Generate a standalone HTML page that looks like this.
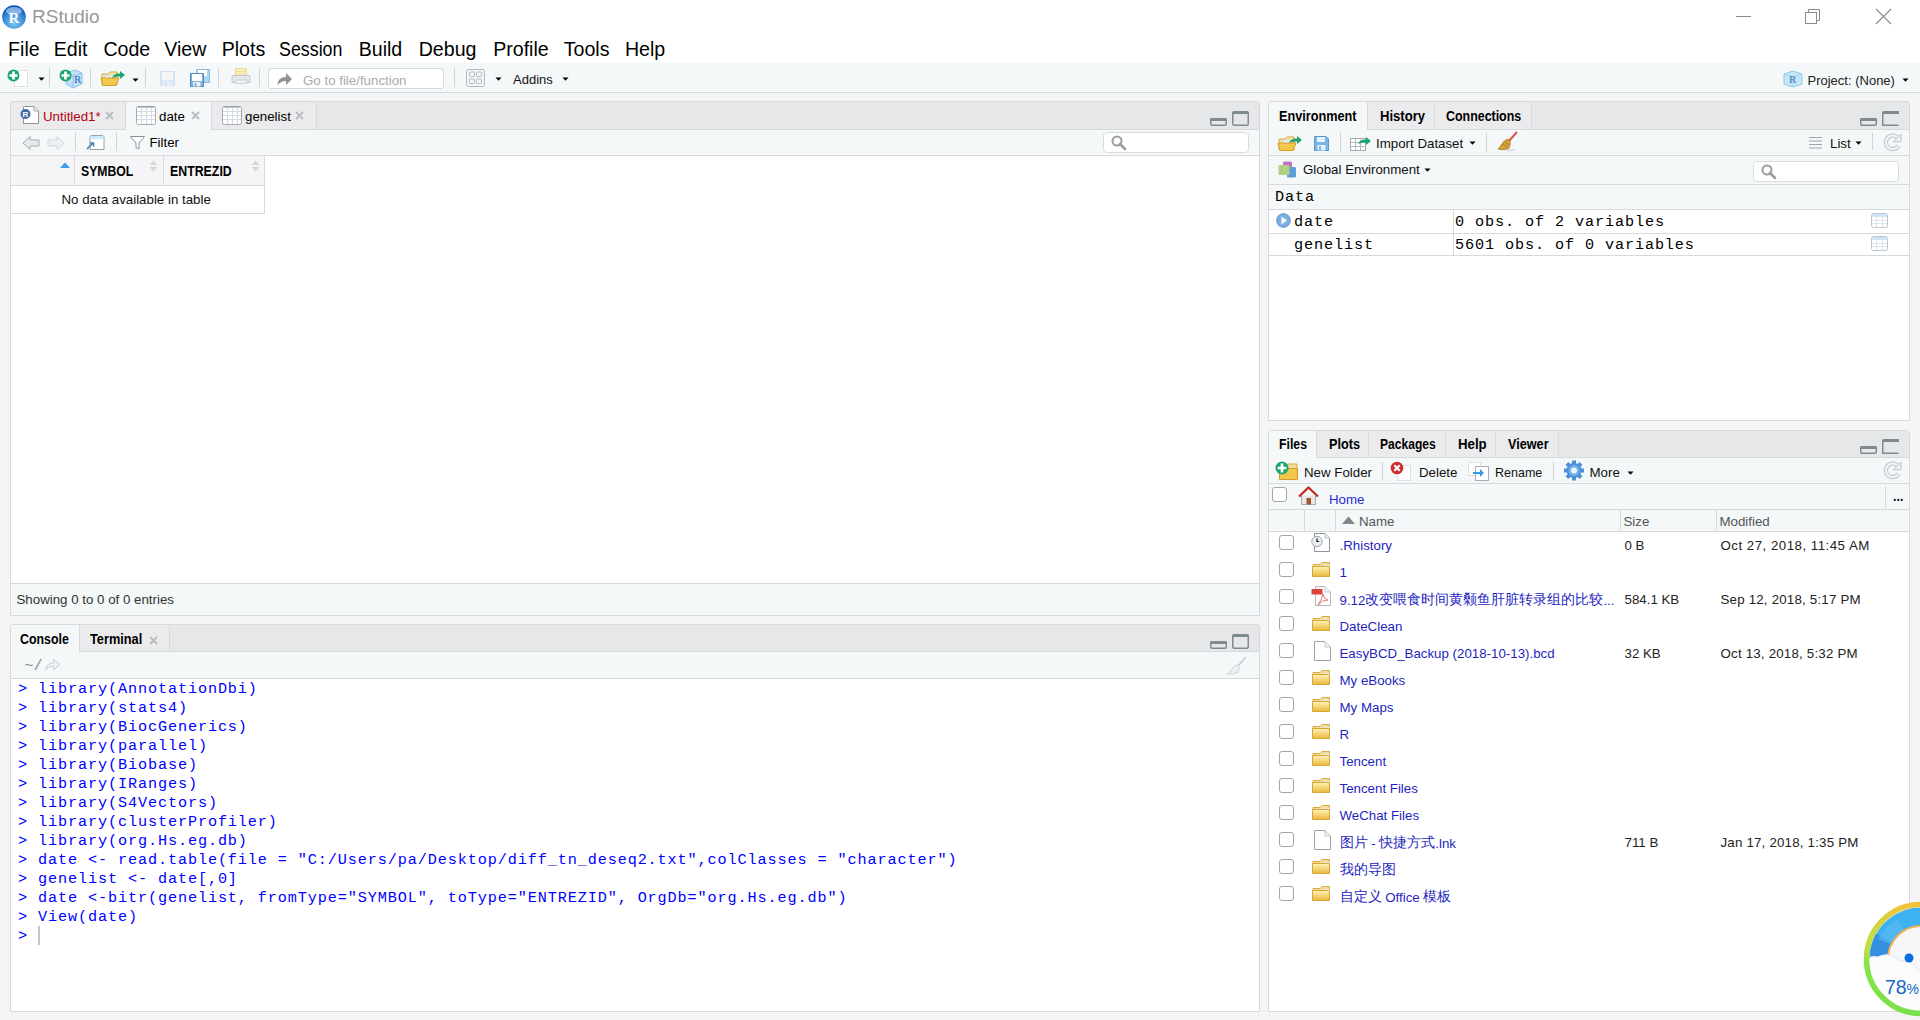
<!DOCTYPE html>
<html><head><meta charset="utf-8">
<style>
*{box-sizing:border-box;margin:0;padding:0}
html,body{width:1920px;height:1020px;overflow:hidden;background:#f5f5f7;font-family:"Liberation Sans",sans-serif;color:#000;position:relative}
.a{position:absolute}
svg.a{overflow:visible}
.t{position:absolute;white-space:nowrap;line-height:1}
.mono{font-family:"Liberation Mono",monospace}
</style></head><body>

<div class="a" style="left:0px;top:0px;width:1920px;height:63px;background:#fff;"></div>
<svg class="a" style="left:2px;top:5px;" width="24" height="24" viewBox="0 0 24 24"><defs><radialGradient id="rg" cx="0.5" cy="0.75" r="0.7"><stop offset="0" stop-color="#7cc8f0"/><stop offset="0.6" stop-color="#3b8fd8"/><stop offset="1" stop-color="#0a4fc0"/></radialGradient></defs><circle cx="12" cy="12" r="11.8" fill="url(#rg)"/><ellipse cx="12" cy="6" rx="8" ry="4" fill="#cfe6fa" opacity="0.55"/><text x="12" y="18" text-anchor="middle" font-family="Liberation Serif" font-weight="bold" font-size="15" fill="#fff">R</text></svg>
<div class="t" style="left:32.00px;top:6.92px;font-size:19px;color:#979797;">RStudio</div>
<div class="a" style="left:1736px;top:16px;width:15px;height:1px;background:#8a8a8a;"></div>
<svg class="a" style="left:1804px;top:8px;" width="18" height="18" viewBox="0 0 18 18"><path d="M4.5 4V1.5H15.5V12.5H13" fill="none" stroke="#8a8a8a"/><rect x="1.5" y="4.5" width="11" height="11" fill="none" stroke="#8a8a8a"/></svg>
<svg class="a" style="left:1875px;top:8px;" width="17" height="17" viewBox="0 0 17 17"><path d="M1 1L16 16M16 1L1 16" stroke="#8a8a8a" stroke-width="1.1"/></svg>
<div class="t" style="left:8.10px;top:39.71px;font-size:19.6px;color:#000;">File</div>
<div class="t" style="left:53.70px;top:39.71px;font-size:19.6px;color:#000;">Edit</div>
<div class="t" style="left:103.40px;top:39.71px;font-size:19.6px;color:#000;">Code</div>
<div class="t" style="left:164.30px;top:39.71px;font-size:19.6px;color:#000;">View</div>
<div class="t" style="left:221.70px;top:39.71px;font-size:19.6px;color:#000;">Plots</div>
<div class="t" style="left:279.20px;top:39.71px;font-size:19.6px;color:#000;transform:scaleX(0.91);transform-origin:0 0;">Session</div>
<div class="t" style="left:358.70px;top:39.71px;font-size:19.6px;color:#000;">Build</div>
<div class="t" style="left:418.70px;top:39.71px;font-size:19.6px;color:#000;">Debug</div>
<div class="t" style="left:493.20px;top:39.71px;font-size:19.6px;color:#000;">Profile</div>
<div class="t" style="left:563.70px;top:39.71px;font-size:19.6px;color:#000;">Tools</div>
<div class="t" style="left:624.95px;top:39.71px;font-size:19.6px;color:#000;">Help</div>
<div class="a" style="left:0px;top:63px;width:1920px;height:29px;background:#f4f8f9;"></div>
<div class="a" style="left:0px;top:92px;width:1920px;height:1px;background:#d5d9db;"></div>
<svg class="a" style="left:7px;top:68px;" width="22" height="20" viewBox="0 0 22 20"><rect x="7.5" y="2.5" width="13" height="16" fill="#fff" stroke="#dfe3e6"/><circle cx="6.5" cy="7.5" r="6" fill="#1ba570"/><path d="M2.42 7.5H10.58M6.5 3.42V11.58" stroke="#fff" stroke-width="2.7"/></svg>
<svg class="a" style="left:38px;top:77px;" width="7" height="4" viewBox="0 0 7 4"><path d="M0.5 0.5H6.5L3.5 3.8Z" fill="#000"/></svg>
<div class="a" style="left:49px;top:68px;width:1px;height:19px;background:#d0d4d6;"></div>
<svg class="a" style="left:58px;top:68px;" width="26" height="22" viewBox="0 0 26 22"><path d="M8 5L17 2L24 5V16L15 20L8 16Z" fill="#bfe0f6" stroke="#8cc3e8"/><path d="M8 5L15 8L24 5M15 8V20" fill="none" stroke="#8cc3e8"/><text x="16" y="15" font-family="Liberation Serif" font-size="11" fill="#2b6cb3">R</text><circle cx="7.5" cy="7.5" r="6" fill="#1ba570"/><path d="M3.42 7.5H11.58M7.5 3.42V11.58" stroke="#fff" stroke-width="2.7"/></svg>
<div class="a" style="left:90px;top:68px;width:1px;height:19px;background:#d0d4d6;"></div>
<svg class="a" style="left:100px;top:69px;" width="26" height="18" viewBox="0 0 26 18"><path d="M2 5H8L10 3H17V16H2Z" fill="#f8e7ab" stroke="#d7a83c"/><path d="M5 6H15L16 16H4Z" fill="#eceff1" stroke="#c9cdd1" stroke-width="0.7"/><path d="M1 9H19L16 16.5H3Z" fill="#f2c94c" stroke="#d39c22"/><path d="M12 9Q14 4 20 4.5V2L25 6L20 10V7.5Q15 7 12 9Z" fill="#1ea56d"/></svg>
<svg class="a" style="left:132px;top:78px;" width="7" height="4" viewBox="0 0 7 4"><path d="M0.5 0.5H6.5L3.5 3.8Z" fill="#000"/></svg>
<div class="a" style="left:145px;top:68px;width:1px;height:19px;background:#d0d4d6;"></div>
<svg class="a" style="left:159px;top:70px;" width="17" height="17" viewBox="0 0 17 17"><path d="M1.5 1.5H15.5V15.5H1.5Z" fill="#dbe7f5" stroke="#d3e0ef" rx="1"/><rect x="3" y="2" width="11" height="8" fill="#f4f6f8"/><rect x="4.5" y="11" width="8" height="4.5" fill="#e9f0f8"/><rect x="6" y="12" width="2" height="3.5" fill="#cfe0f3"/></svg>
<svg class="a" style="left:189px;top:68px;" width="22" height="20" viewBox="0 0 22 20"><path d="M7.5 1.5H20.5V14.5H7.5Z" fill="#a9daf5" stroke="#8fb9dc"/><rect x="9" y="2" width="9" height="6" fill="#ffffff"/><path d="M1.5 5.5H14.5V18.5H1.5Z" fill="#78afdc" stroke="#5b87b8"/><rect x="3" y="6" width="10" height="7" fill="#ffffff"/><rect x="4" y="14" width="7.5" height="4.5" fill="#eef4fa"/><rect x="5.5" y="15" width="2" height="3.5" fill="#78afdc"/></svg>
<div class="a" style="left:218px;top:68px;width:1px;height:19px;background:#d0d4d6;"></div>
<svg class="a" style="left:231px;top:67px;" width="20" height="19" viewBox="0 0 20 19"><rect x="4.5" y="1.5" width="11" height="8" fill="#f6efbe" stroke="#e8dc9a"/><path d="M4.5 4.5H15.5M4.5 7H15.5" stroke="#eadf9e"/><path d="M2 8.5H18Q19 8.5 19 9.5V15.5H1V9.5Q1 8.5 2 8.5Z" fill="#e3e7ea" stroke="#c3c8cc"/><rect x="4.5" y="13" width="11" height="3.5" fill="#eef1f3" stroke="#cfd3d6"/></svg>
<div class="a" style="left:259px;top:68px;width:1px;height:19px;background:#d0d4d6;"></div>
<div class="a" style="left:268px;top:68px;width:176px;height:21px;background:#fff;border:1px solid #d5d9dc;border-radius:3px"></div>
<svg class="a" style="left:276px;top:71px;" width="17" height="15" viewBox="0 0 17 15"><path d="M1.5 14.5Q1.5 6 10 6V2L16 8L10 14V10Q4 10 1.5 14.5Z" fill="#8e9297"/></svg>
<div class="t" style="left:303.00px;top:73.74px;font-size:13.3px;color:#a7abaf;">Go to file/function</div>
<div class="a" style="left:454px;top:68px;width:1px;height:19px;background:#d0d4d6;"></div>
<svg class="a" style="left:466px;top:69px;" width="19" height="18" viewBox="0 0 19 18"><rect x="0.5" y="0.5" width="18" height="17" rx="2" fill="#f3f5f7" stroke="#b3b8bd"/><rect x="3.5" y="3" width="5" height="4.5" rx="0.8" fill="none" stroke="#b5babf"/><rect x="10.5" y="3" width="5" height="4.5" rx="0.8" fill="none" stroke="#b5babf"/><rect x="3.5" y="10" width="5" height="4.5" rx="0.8" fill="none" stroke="#b5babf"/><rect x="10.5" y="10" width="5" height="4.5" rx="0.8" fill="none" stroke="#b5babf"/></svg>
<svg class="a" style="left:495px;top:77px;" width="7" height="4" viewBox="0 0 7 4"><path d="M0.5 0.5H6.5L3.5 3.8Z" fill="#000"/></svg>
<div class="t" style="left:513.00px;top:73.10px;font-size:13px;color:#111;">Addins</div>
<svg class="a" style="left:562px;top:77px;" width="7" height="4" viewBox="0 0 7 4"><path d="M0.5 0.5H6.5L3.5 3.8Z" fill="#000"/></svg>
<svg class="a" style="left:1783px;top:70px;" width="20" height="18" viewBox="0 0 20 18"><path d="M1 4L10 1L19 4V14L10 17L1 14Z" fill="#c6e6f8" stroke="#8ccbec"/><path d="M1 4L10 7L19 4M10 7V17" fill="none" stroke="#9ad2ef"/><text x="6" y="13" font-family="Liberation Serif" font-size="11" fill="#2e78b8">R</text></svg>
<div class="t" style="left:1807.50px;top:73.70px;font-size:13px;color:#222;">Project: (None)</div>
<svg class="a" style="left:1902px;top:78px;" width="7" height="4" viewBox="0 0 7 4"><path d="M0.5 0.5H6.5L3.5 3.8Z" fill="#000"/></svg>
<div class="a" style="left:10px;top:101px;width:1250px;height:515px;background:#fff;border:1px solid #d6dadc;border-radius:3px 3px 0 0"></div>
<div class="a" style="left:11px;top:102px;width:1248px;height:27px;background:#e6e7e9;border-radius:2px 2px 0 0"></div>
<div class="a" style="left:11px;top:129px;width:1248px;height:1px;background:#d6dadc;"></div>
<div class="a" style="left:11px;top:102px;width:115px;height:27px;background:#ebebed;border-right:1px solid #d6dadc;border-radius:2px 2px 0 0"></div>
<div class="a" style="left:126px;top:102px;width:86px;height:28px;background:#f4f8f9;border-right:1px solid #d6dadc;border-radius:2px 2px 0 0"></div>
<div class="a" style="left:212px;top:102px;width:105px;height:27px;background:#ebebed;border-right:1px solid #d6dadc;border-radius:2px 2px 0 0"></div>
<svg class="a" style="left:21px;top:105px;" width="20" height="20" viewBox="0 0 20 20"><path d="M2.5 1.5H13L17.5 6V18.5H2.5Z" fill="#fff" stroke="#8f9499"/><path d="M13 1.5V6H17.5" fill="#e9ebed" stroke="#a9adb1"/><circle cx="4.5" cy="9" r="5" fill="#4569a8"/><text x="4.5" y="12.2" text-anchor="middle" font-size="8" font-weight="bold" fill="#fff" font-family="Liberation Sans">R</text></svg>
<div class="t" style="left:43.00px;top:109.74px;font-size:13.3px;color:#b5000e;">Untitled1*</div>
<svg class="a" style="left:105px;top:111px;" width="9" height="9" viewBox="0 0 9 9"><path d="M1 1L8 8M8 1L1 8" stroke="#b8bcbf" stroke-width="1.8"/></svg>
<svg class="a" style="left:136px;top:106px;" width="20" height="19" viewBox="0 0 20 19"><rect x="0.5" y="0.5" width="19" height="18" rx="2" fill="#fff" stroke="#a3a8ad"/><path d="M2 1H18" stroke="#8d9297" stroke-width="1"/><path d="M5.5 2V18" stroke="#d2dbe3"/><path d="M10.5 2V18" stroke="#d2dbe3"/><path d="M15.5 2V18" stroke="#d2dbe3"/><path d="M1 5.5H19" stroke="#d2dbe3"/><path d="M1 9.5H19" stroke="#d2dbe3"/><path d="M1 13.5H19" stroke="#d2dbe3"/></svg>
<div class="t" style="left:159.00px;top:109.74px;font-size:13.3px;color:#000;">date</div>
<svg class="a" style="left:191px;top:111px;" width="9" height="9" viewBox="0 0 9 9"><path d="M1 1L8 8M8 1L1 8" stroke="#b8bcbf" stroke-width="1.8"/></svg>
<svg class="a" style="left:222px;top:106px;" width="20" height="19" viewBox="0 0 20 19"><rect x="0.5" y="0.5" width="19" height="18" rx="2" fill="#fff" stroke="#a3a8ad"/><path d="M2 1H18" stroke="#8d9297" stroke-width="1"/><path d="M5.5 2V18" stroke="#d2dbe3"/><path d="M10.5 2V18" stroke="#d2dbe3"/><path d="M15.5 2V18" stroke="#d2dbe3"/><path d="M1 5.5H19" stroke="#d2dbe3"/><path d="M1 9.5H19" stroke="#d2dbe3"/><path d="M1 13.5H19" stroke="#d2dbe3"/></svg>
<div class="t" style="left:245.00px;top:109.74px;font-size:13.3px;color:#000;">genelist</div>
<svg class="a" style="left:295px;top:111px;" width="9" height="9" viewBox="0 0 9 9"><path d="M1 1L8 8M8 1L1 8" stroke="#b8bcbf" stroke-width="1.8"/></svg>
<svg class="a" style="left:1210px;top:118px;" width="17" height="8" viewBox="0 0 17 8"><rect x="0.75" y="0.75" width="15.5" height="6.5" rx="1.5" fill="none" stroke="#7f8a90" stroke-width="1.5"/><rect x="0" y="0" width="17" height="3" rx="1.5" fill="#7f8a90"/></svg>
<svg class="a" style="left:1232px;top:111px;" width="17" height="15" viewBox="0 0 17 15"><rect x="0.75" y="0.75" width="15.5" height="13.5" rx="1.5" fill="none" stroke="#7f8a90" stroke-width="1.5"/><path d="M0 3Q0 0 3 0H14Q17 0 17 3Z" fill="#7f8a90"/></svg>
<div class="a" style="left:11px;top:130px;width:1248px;height:25px;background:#f4f8f9;"></div>
<div class="a" style="left:11px;top:155px;width:1248px;height:1px;background:#d6dadc;"></div>
<svg class="a" style="left:22px;top:135px;" width="18" height="16" viewBox="0 0 18 16"><path d="M1 8L8 1.5V5H17V11H8V14.5Z" fill="#e8e9eb" stroke="#a8acb0"/></svg>
<svg class="a" style="left:47px;top:135px;" width="18" height="16" viewBox="0 0 18 16"><path d="M17 8L10 1.5V5H1V11H10V14.5Z" fill="#eef0f2" stroke="#d3d6d9"/></svg>
<div class="a" style="left:75px;top:132px;width:1px;height:19px;background:#d0d4d6;"></div>
<svg class="a" style="left:86px;top:135px;" width="20" height="16" viewBox="0 0 20 16"><path d="M4 2.5Q4 0.5 6 0.5H16Q18 0.5 18 2.5V14.5H4Z" fill="#fff" stroke="#9aa0a5"/><path d="M4.5 1H17.5V4H4.5Z" fill="#c5ecf9"/><path d="M1 14L7 8M4 8H7.5V11.5" fill="none" stroke="#4a7fb8" stroke-width="1.6"/></svg>
<div class="a" style="left:116px;top:132px;width:1px;height:19px;background:#d0d4d6;"></div>
<svg class="a" style="left:130px;top:136px;" width="15" height="14" viewBox="0 0 15 14"><path d="M0.5 0.5H14.5L9 7V13L6 11.5V7Z" fill="#fff" stroke="#8a9096"/></svg>
<div class="t" style="left:149.50px;top:135.74px;font-size:13.3px;color:#000;">Filter</div>
<div class="a" style="left:1103px;top:132px;width:146px;height:21px;background:#fff;border:1px solid #d8dcde;border-radius:4px"></div>
<svg class="a" style="left:1111px;top:135px;" width="16" height="16" viewBox="0 0 16 16"><circle cx="6" cy="6" r="4.5" fill="none" stroke="#9a9ea3" stroke-width="2"/><path d="M9 9L14 14" stroke="#9a9ea3" stroke-width="2.6" stroke-linecap="round"/></svg>
<div class="a" style="left:11px;top:156px;width:254px;height:30px;background:#f5f5f7;"></div>
<div class="a" style="left:11px;top:185px;width:254px;height:1px;background:#d6dadc;"></div>
<div class="a" style="left:74px;top:156px;width:1px;height:29px;background:#d6dadc;"></div>
<div class="a" style="left:163px;top:156px;width:1px;height:29px;background:#d6dadc;"></div>
<div class="a" style="left:264px;top:156px;width:1px;height:57px;background:#d6dadc;"></div>
<div class="a" style="left:11px;top:213px;width:254px;height:1px;background:#d6dadc;"></div>
<svg class="a" style="left:60px;top:162px;" width="10" height="6" viewBox="0 0 10 6"><path d="M0 6L5 0.5L10 6Z" fill="#3d9be9"/></svg>
<svg class="a" style="left:149px;top:160px;" width="9" height="12" viewBox="0 0 9 12"><path d="M0.5 5L4.5 0.5L8.5 5Z M0.5 7L4.5 11.5L8.5 7Z" fill="#d4d6d9"/></svg>
<svg class="a" style="left:251px;top:160px;" width="9" height="12" viewBox="0 0 9 12"><path d="M0.5 5L4.5 0.5L8.5 5Z M0.5 7L4.5 11.5L8.5 7Z" fill="#d4d6d9"/></svg>
<div class="t" style="left:80.50px;top:165.22px;font-size:13.8px;color:#000;font-weight:bold;transform:scaleX(0.886);transform-origin:0 0;">SYMBOL</div>
<div class="t" style="left:169.50px;top:165.22px;font-size:13.8px;color:#000;font-weight:bold;transform:scaleX(0.895);transform-origin:0 0;">ENTREZID</div>
<div class="t" style="left:61.50px;top:192.74px;font-size:13.3px;color:#111;">No data available in table</div>
<div class="a" style="left:11px;top:583px;width:1248px;height:1px;background:#d6dadc;"></div>
<div class="a" style="left:11px;top:584px;width:1248px;height:31px;background:#f4f8f9;"></div>
<div class="t" style="left:16.50px;top:592.84px;font-size:13.3px;color:#333;">Showing 0 to 0 of 0 entries</div>
<div class="a" style="left:10px;top:624px;width:1250px;height:388px;background:#fff;border:1px solid #d6dadc;border-radius:3px 3px 0 0"></div>
<div class="a" style="left:11px;top:625px;width:1248px;height:26px;background:#e6e7e9;border-radius:2px 2px 0 0"></div>
<div class="a" style="left:11px;top:651px;width:1248px;height:1px;background:#d6dadc;"></div>
<div class="a" style="left:11px;top:625px;width:69px;height:27px;background:#f4f8f9;border-right:1px solid #d6dadc;border-radius:2px 2px 0 0"></div>
<div class="a" style="left:80px;top:625px;width:90px;height:26px;background:#ebebed;border-right:1px solid #d6dadc;border-radius:2px 2px 0 0"></div>
<div class="t" style="left:20.00px;top:633.32px;font-size:13.8px;color:#000;font-weight:bold;transform:scaleX(0.896);transform-origin:0 0;">Console</div>
<div class="t" style="left:90.00px;top:633.32px;font-size:13.8px;color:#000;font-weight:bold;transform:scaleX(0.925);transform-origin:0 0;">Terminal</div>
<svg class="a" style="left:149px;top:636px;" width="9" height="9" viewBox="0 0 9 9"><path d="M1 1L8 8M8 1L1 8" stroke="#b8bcbf" stroke-width="1.8"/></svg>
<svg class="a" style="left:1210px;top:641px;" width="17" height="8" viewBox="0 0 17 8"><rect x="0.75" y="0.75" width="15.5" height="6.5" rx="1.5" fill="none" stroke="#7f8a90" stroke-width="1.5"/><rect x="0" y="0" width="17" height="3" rx="1.5" fill="#7f8a90"/></svg>
<svg class="a" style="left:1232px;top:634px;" width="17" height="15" viewBox="0 0 17 15"><rect x="0.75" y="0.75" width="15.5" height="13.5" rx="1.5" fill="none" stroke="#7f8a90" stroke-width="1.5"/><path d="M0 3Q0 0 3 0H14Q17 0 17 3Z" fill="#7f8a90"/></svg>
<div class="a" style="left:11px;top:652px;width:1248px;height:26px;background:#f4f8f9;"></div>
<div class="a" style="left:11px;top:678px;width:1248px;height:1px;background:#d6dadc;"></div>
<div class="t mono" style="left:24.5px;top:658.5px;font-size:15.2px;color:#8a8a8a">~/</div>
<svg class="a" style="left:45px;top:658px;" width="16" height="13" viewBox="0 0 16 13"><path d="M1 12Q1 5 8.5 5V1.5L15 6.5L8.5 11.5V8Q3 8 1 12Z" fill="#f0f2f4" stroke="#c9cdd1"/></svg>
<svg class="a" style="left:1226px;top:656px;" width="22" height="20" viewBox="0 0 22 20"><path d="M20 1L12 10" stroke="#c9cdd1" stroke-width="1.8"/><path d="M12 9Q8 9 6 13Q4 16 1 18Q8 19 12 16Q14 13 13 10Z" fill="#eceff1" stroke="#cfd3d6"/></svg>
<div class="t mono" style="left:18.00px;top:682.35px;font-size:15.2px;letter-spacing:0.880px;color:#0000ff;">&gt; library(AnnotationDbi)</div>
<div class="t mono" style="left:18.00px;top:701.35px;font-size:15.2px;letter-spacing:0.880px;color:#0000ff;">&gt; library(stats4)</div>
<div class="t mono" style="left:18.00px;top:720.35px;font-size:15.2px;letter-spacing:0.880px;color:#0000ff;">&gt; library(BiocGenerics)</div>
<div class="t mono" style="left:18.00px;top:739.35px;font-size:15.2px;letter-spacing:0.880px;color:#0000ff;">&gt; library(parallel)</div>
<div class="t mono" style="left:18.00px;top:758.35px;font-size:15.2px;letter-spacing:0.880px;color:#0000ff;">&gt; library(Biobase)</div>
<div class="t mono" style="left:18.00px;top:777.35px;font-size:15.2px;letter-spacing:0.880px;color:#0000ff;">&gt; library(IRanges)</div>
<div class="t mono" style="left:18.00px;top:796.35px;font-size:15.2px;letter-spacing:0.880px;color:#0000ff;">&gt; library(S4Vectors)</div>
<div class="t mono" style="left:18.00px;top:815.35px;font-size:15.2px;letter-spacing:0.880px;color:#0000ff;">&gt; library(clusterProfiler)</div>
<div class="t mono" style="left:18.00px;top:834.35px;font-size:15.2px;letter-spacing:0.880px;color:#0000ff;">&gt; library(org.Hs.eg.db)</div>
<div class="t mono" style="left:18.00px;top:853.35px;font-size:15.2px;letter-spacing:0.880px;color:#0000ff;">&gt; date &lt;- read.table(file = "C:/Users/pa/Desktop/diff_tn_deseq2.txt",colClasses = "character")</div>
<div class="t mono" style="left:18.00px;top:872.35px;font-size:15.2px;letter-spacing:0.880px;color:#0000ff;">&gt; genelist &lt;- date[,0]</div>
<div class="t mono" style="left:18.00px;top:891.35px;font-size:15.2px;letter-spacing:0.880px;color:#0000ff;">&gt; date &lt;-bitr(genelist, fromType="SYMBOL", toType="ENTREZID", OrgDb="org.Hs.eg.db")</div>
<div class="t mono" style="left:18.00px;top:910.35px;font-size:15.2px;letter-spacing:0.880px;color:#0000ff;">&gt; View(date)</div>
<div class="t mono" style="left:18.00px;top:929.35px;font-size:15.2px;letter-spacing:0.880px;color:#0000ff;">&gt; </div>
<div class="a" style="left:38px;top:926px;width:2px;height:19px;background:#c3c7ca;"></div>
<div class="a" style="left:1268px;top:101px;width:642px;height:320px;background:#fff;border:1px solid #d6dadc;border-radius:3px 3px 0 0"></div>
<div class="a" style="left:1269px;top:102px;width:640px;height:27px;background:#e6e7e9;border-radius:2px 2px 0 0"></div>
<div class="a" style="left:1269px;top:129px;width:640px;height:1px;background:#d6dadc;"></div>
<div class="a" style="left:1269px;top:102px;width:99px;height:28px;background:#f4f8f9;border-right:1px solid #d6dadc;border-radius:2px 2px 0 0"></div>
<div class="a" style="left:1368px;top:102px;width:67px;height:27px;background:#ebebed;border-right:1px solid #d6dadc;border-radius:2px 2px 0 0"></div>
<div class="a" style="left:1435px;top:102px;width:97px;height:27px;background:#ebebed;border-right:1px solid #d6dadc;border-radius:2px 2px 0 0"></div>
<div class="t" style="left:1279.00px;top:110.12px;font-size:13.8px;color:#000;font-weight:bold;transform:scaleX(0.92);transform-origin:0 0;">Environment</div>
<div class="t" style="left:1379.50px;top:110.12px;font-size:13.8px;color:#000;font-weight:bold;transform:scaleX(0.948);transform-origin:0 0;">History</div>
<div class="t" style="left:1446.00px;top:110.12px;font-size:13.8px;color:#000;font-weight:bold;transform:scaleX(0.9);transform-origin:0 0;">Connections</div>
<svg class="a" style="left:1860px;top:118px;" width="17" height="8" viewBox="0 0 17 8"><rect x="0.75" y="0.75" width="15.5" height="6.5" rx="1.5" fill="none" stroke="#7f8a90" stroke-width="1.5"/><rect x="0" y="0" width="17" height="3" rx="1.5" fill="#7f8a90"/></svg>
<svg class="a" style="left:1882px;top:111px;" width="17" height="15" viewBox="0 0 17 15"><path d="M16.5 14.25H0.75V2.5Q0.75 0.75 2.5 0.75H16.5" fill="none" stroke="#7f8a90" stroke-width="1.5"/><path d="M0 3Q0 0 3 0H17V3H0Z" fill="#7f8a90"/></svg>
<div class="a" style="left:1269px;top:130px;width:640px;height:25px;background:#f4f8f9;"></div>
<div class="a" style="left:1269px;top:155px;width:640px;height:1px;background:#d6dadc;"></div>
<svg class="a" style="left:1277px;top:134px;" width="26" height="18" viewBox="0 0 26 18"><path d="M2 5H8L10 3H17V16H2Z" fill="#f8e7ab" stroke="#d7a83c"/><path d="M5 6H15L16 16H4Z" fill="#eceff1" stroke="#c9cdd1" stroke-width="0.7"/><path d="M1 9H19L16 16.5H3Z" fill="#f2c94c" stroke="#d39c22"/><path d="M12 9Q14 4 20 4.5V2L25 6L20 10V7.5Q15 7 12 9Z" fill="#1ea56d"/></svg>
<svg class="a" style="left:1313px;top:135px;" width="17" height="17" viewBox="0 0 17 17"><path d="M1.5 1.5H13L15.5 4V15.5H1.5Z" fill="#7bb6e3" stroke="#5a95c8"/><rect x="4" y="2" width="8" height="5" fill="#e6f2fb"/><rect x="4.5" y="10" width="8" height="5.5" fill="#e6f2fb"/><rect x="6" y="11" width="2" height="4.5" fill="#7bb6e3"/></svg>
<div class="a" style="left:1340px;top:133px;width:1px;height:19px;background:#d0d4d6;"></div>
<svg class="a" style="left:1349px;top:135px;" width="24" height="17" viewBox="0 0 24 17"><rect x="1.5" y="3.5" width="15" height="12" fill="#fff" stroke="#a3a8ad"/><path d="M1.5 7.5H16.5M1.5 11.5H16.5M6.5 3.5V15.5M11.5 3.5V15.5" stroke="#b7bcc0"/><path d="M9 9Q11 4 17 4.5V2L22 6L17 10V7.5Q12 7 9 9Z" fill="#1ea56d"/></svg>
<div class="t" style="left:1376.00px;top:136.54px;font-size:13.3px;color:#111;">Import Dataset</div>
<svg class="a" style="left:1469px;top:141px;" width="7" height="4" viewBox="0 0 7 4"><path d="M0.5 0.5H6.5L3.5 3.8Z" fill="#000"/></svg>
<div class="a" style="left:1486px;top:133px;width:1px;height:19px;background:#d0d4d6;"></div>
<svg class="a" style="left:1497px;top:131px;" width="22" height="21" viewBox="0 0 22 21"><path d="M20 1L12 10" stroke="#d9534f" stroke-width="2"/><path d="M11 8Q7 9 5 13Q3 16 1 18Q7 20 12 17Q14 13 13 10Z" fill="#d4a23a" stroke="#a8761c" stroke-width="0.8"/><path d="M6 13L10 16M8 11L12 14" stroke="#a8761c" stroke-width="0.8"/><ellipse cx="13" cy="19" rx="6" ry="1.2" fill="#ccc" opacity="0.6"/></svg>
<svg class="a" style="left:1809px;top:137px;" width="13" height="12" viewBox="0 0 13 12"><path d="M0 0.5H13M0 4H13M0 7.5H13M0 11H13" stroke="#9ea3a8"/></svg>
<div class="t" style="left:1830.00px;top:136.54px;font-size:13.3px;color:#111;">List</div>
<svg class="a" style="left:1855px;top:141px;" width="7" height="4" viewBox="0 0 7 4"><path d="M0.5 0.5H6.5L3.5 3.8Z" fill="#000"/></svg>
<div class="a" style="left:1872px;top:133px;width:1px;height:17px;background:#d0d4d6;"></div>
<svg class="a" style="left:1883px;top:133px;" width="20" height="20" viewBox="0 0 20 20"><path d="M14.5 4.6A6.8 6.8 0 1 0 15.6 12.6" fill="none" stroke="#bfc4c9" stroke-width="4.4"/><path d="M14.5 4.6A6.8 6.8 0 1 0 15.6 12.6" fill="none" stroke="#eef2f6" stroke-width="2.4"/><path d="M18 1.2V8.8H10.4Z" fill="#eef2f6" stroke="#bfc4c9" stroke-width="1" stroke-linejoin="round"/></svg>
<div class="a" style="left:1269px;top:156px;width:640px;height:28px;background:#f4f8f9;"></div>
<div class="a" style="left:1269px;top:184px;width:640px;height:1px;background:#d6dadc;"></div>
<svg class="a" style="left:1278px;top:161px;" width="19" height="17" viewBox="0 0 19 17"><rect x="5" y="0.5" width="9" height="10" rx="1.5" fill="#c371c8"/><rect x="9" y="6" width="9" height="10.5" rx="1.5" fill="#5a9fd8"/><rect x="0.5" y="4" width="11" height="10" rx="1" fill="#b3cf84"/></svg>
<div class="t" style="left:1303.00px;top:163.44px;font-size:13.3px;color:#111;">Global Environment</div>
<svg class="a" style="left:1424px;top:168px;" width="7" height="4" viewBox="0 0 7 4"><path d="M0.5 0.5H6.5L3.5 3.8Z" fill="#000"/></svg>
<div class="a" style="left:1753px;top:161px;width:146px;height:21px;background:#fff;border:1px solid #d8dcde;border-radius:4px"></div>
<svg class="a" style="left:1761px;top:164px;" width="16" height="16" viewBox="0 0 16 16"><circle cx="6" cy="6" r="4.5" fill="none" stroke="#9a9ea3" stroke-width="2"/><path d="M9 9L14 14" stroke="#9a9ea3" stroke-width="2.6" stroke-linecap="round"/></svg>
<div class="a" style="left:1269px;top:185px;width:640px;height:24px;background:#f4f8f9;"></div>
<div class="a" style="left:1269px;top:209px;width:640px;height:1px;background:#d6dadc;"></div>
<div class="t mono" style="left:1275.00px;top:190.35px;font-size:15.2px;letter-spacing:0.880px;color:#000;">Data</div>
<div class="a" style="left:1269px;top:210px;width:640px;height:23px;background:#fff;"></div>
<div class="a" style="left:1269px;top:233px;width:640px;height:1px;background:#d6dadc;"></div>
<div class="a" style="left:1269px;top:234px;width:640px;height:21px;background:#fff;"></div>
<div class="a" style="left:1269px;top:255px;width:640px;height:1px;background:#d6dadc;"></div>
<div class="a" style="left:1453px;top:210px;width:1px;height:45px;background:#d6dadc;"></div>
<svg class="a" style="left:1276px;top:213px;" width="15" height="15" viewBox="0 0 15 15"><circle cx="7.5" cy="7.5" r="7" fill="#6a9bd6" stroke="#8cb3e0"/><circle cx="7.5" cy="7.5" r="5.6" fill="#7fb0e6"/><path d="M5.5 3.8L11 7.5L5.5 11.2Z" fill="#fff"/></svg>
<div class="t mono" style="left:1294.00px;top:215.05px;font-size:15.2px;letter-spacing:0.880px;color:#000;">date</div>
<div class="t mono" style="left:1294.00px;top:237.65px;font-size:15.2px;letter-spacing:0.880px;color:#000;">genelist</div>
<div class="t mono" style="left:1455.00px;top:215.05px;font-size:15.2px;letter-spacing:0.880px;color:#000;">0 obs. of 2 variables</div>
<div class="t mono" style="left:1455.00px;top:237.65px;font-size:15.2px;letter-spacing:0.880px;color:#000;">5601 obs. of 0 variables</div>
<svg class="a" style="left:1871px;top:213px;" width="17" height="15" viewBox="0 0 17 15"><rect x="0.5" y="0.5" width="16" height="14" rx="2" fill="#fff" stroke="#b9c6cf"/><rect x="1" y="1" width="15" height="3" rx="1" fill="#cfe5f5"/><path d="M5.5 4V14" stroke="#dfe6eb"/><path d="M11.5 4V14" stroke="#dfe6eb"/><path d="M1 7.5H16" stroke="#dfe6eb"/><path d="M1 10.5H16" stroke="#dfe6eb"/></svg>
<svg class="a" style="left:1871px;top:236px;" width="17" height="15" viewBox="0 0 17 15"><rect x="0.5" y="0.5" width="16" height="14" rx="2" fill="#fff" stroke="#b9c6cf"/><rect x="1" y="1" width="15" height="3" rx="1" fill="#cfe5f5"/><path d="M5.5 4V14" stroke="#dfe6eb"/><path d="M11.5 4V14" stroke="#dfe6eb"/><path d="M1 7.5H16" stroke="#dfe6eb"/><path d="M1 10.5H16" stroke="#dfe6eb"/></svg>
<div class="a" style="left:1268px;top:430px;width:642px;height:582px;background:#fff;border:1px solid #d6dadc;border-radius:3px 3px 0 0"></div>
<div class="a" style="left:1269px;top:431px;width:640px;height:26px;background:#e6e7e9;border-radius:2px 2px 0 0"></div>
<div class="a" style="left:1269px;top:457px;width:640px;height:1px;background:#d6dadc;"></div>
<div class="a" style="left:1269px;top:431px;width:48px;height:27px;background:#f4f8f9;border-right:1px solid #d6dadc;border-radius:2px 2px 0 0"></div>
<div class="a" style="left:1317px;top:431px;width:52px;height:26px;background:#ebebed;border-right:1px solid #d6dadc;border-radius:2px 2px 0 0"></div>
<div class="a" style="left:1369px;top:431px;width:77px;height:26px;background:#ebebed;border-right:1px solid #d6dadc;border-radius:2px 2px 0 0"></div>
<div class="a" style="left:1446px;top:431px;width:50px;height:26px;background:#ebebed;border-right:1px solid #d6dadc;border-radius:2px 2px 0 0"></div>
<div class="a" style="left:1496px;top:431px;width:63px;height:26px;background:#ebebed;border-right:1px solid #d6dadc;border-radius:2px 2px 0 0"></div>
<div class="t" style="left:1279.00px;top:438.32px;font-size:13.8px;color:#000;font-weight:bold;transform:scaleX(0.89);transform-origin:0 0;">Files</div>
<div class="t" style="left:1328.50px;top:438.32px;font-size:13.8px;color:#000;font-weight:bold;transform:scaleX(0.92);transform-origin:0 0;">Plots</div>
<div class="t" style="left:1380.00px;top:438.32px;font-size:13.8px;color:#000;font-weight:bold;transform:scaleX(0.875);transform-origin:0 0;">Packages</div>
<div class="t" style="left:1457.50px;top:438.32px;font-size:13.8px;color:#000;font-weight:bold;transform:scaleX(0.96);transform-origin:0 0;">Help</div>
<div class="t" style="left:1507.50px;top:438.32px;font-size:13.8px;color:#000;font-weight:bold;transform:scaleX(0.917);transform-origin:0 0;">Viewer</div>
<svg class="a" style="left:1860px;top:446px;" width="17" height="8" viewBox="0 0 17 8"><rect x="0.75" y="0.75" width="15.5" height="6.5" rx="1.5" fill="none" stroke="#7f8a90" stroke-width="1.5"/><rect x="0" y="0" width="17" height="3" rx="1.5" fill="#7f8a90"/></svg>
<svg class="a" style="left:1882px;top:439px;" width="17" height="15" viewBox="0 0 17 15"><path d="M16.5 14.25H0.75V2.5Q0.75 0.75 2.5 0.75H16.5" fill="none" stroke="#7f8a90" stroke-width="1.5"/><path d="M0 3Q0 0 3 0H17V3H0Z" fill="#7f8a90"/></svg>
<div class="a" style="left:1269px;top:458px;width:640px;height:25px;background:#f4f8f9;"></div>
<div class="a" style="left:1269px;top:483px;width:640px;height:1px;background:#d6dadc;"></div>
<svg class="a" style="left:1275px;top:461px;" width="24" height="19" viewBox="0 0 24 19"><path d="M5 5H11L13 3H22V18H5Z" fill="#f2dea0" stroke="#d7a93e"/><path d="M4.5 7.5H22.5V18.5H4.5Z" fill="#f2c94c" stroke="#d39c22"/><circle cx="7" cy="7" r="6.5" fill="#1ba570"/><path d="M2.58 7H11.42M7 2.58V11.42" stroke="#fff" stroke-width="2.7"/></svg>
<div class="t" style="left:1304.00px;top:466.04px;font-size:13.3px;color:#111;">New Folder</div>
<div class="a" style="left:1382px;top:462px;width:1px;height:18px;background:#d0d4d6;"></div>
<svg class="a" style="left:1390px;top:461px;" width="22" height="20" viewBox="0 0 22 20"><rect x="7.5" y="4.5" width="13" height="15" fill="#fff" stroke="#dde1e4"/><circle cx="7" cy="7" r="6.3" fill="#c9302c"/><path d="M4.3 4.3L9.7 9.7M9.7 4.3L4.3 9.7" stroke="#fff" stroke-width="2.2"/></svg>
<div class="t" style="left:1419.00px;top:466.04px;font-size:13.3px;color:#111;">Delete</div>
<svg class="a" style="left:1468px;top:462px;" width="22" height="19" viewBox="0 0 22 19"><rect x="0.5" y="0.5" width="12" height="13" fill="#fff" stroke="#dde1e4"/><rect x="7.5" y="4.5" width="13" height="14" fill="#fff" stroke="#a9aeb2"/><path d="M5 10H12V7L16 11L12 15V12H5Z" fill="#2f9be0"/></svg>
<div class="t" style="left:1495.00px;top:466.04px;font-size:13.3px;color:#111;transform:scaleX(0.94);transform-origin:0 0;">Rename</div>
<div class="a" style="left:1553px;top:462px;width:1px;height:18px;background:#d0d4d6;"></div>
<svg class="a" style="left:1564px;top:460px;" width="20" height="21" viewBox="0 0 20 21"><g transform="translate(10 10.5)"><circle r="7.5" fill="#4b8fd6"/><rect x="-2" y="-10" width="4" height="5" fill="#4b8fd6" transform="rotate(0)"/><rect x="-2" y="-10" width="4" height="5" fill="#4b8fd6" transform="rotate(45)"/><rect x="-2" y="-10" width="4" height="5" fill="#4b8fd6" transform="rotate(90)"/><rect x="-2" y="-10" width="4" height="5" fill="#4b8fd6" transform="rotate(135)"/><rect x="-2" y="-10" width="4" height="5" fill="#4b8fd6" transform="rotate(180)"/><rect x="-2" y="-10" width="4" height="5" fill="#4b8fd6" transform="rotate(225)"/><rect x="-2" y="-10" width="4" height="5" fill="#4b8fd6" transform="rotate(270)"/><rect x="-2" y="-10" width="4" height="5" fill="#4b8fd6" transform="rotate(315)"/><circle r="5.5" fill="#72b2ea"/><circle r="3" fill="#e8f3fc"/></g></svg>
<div class="t" style="left:1589.50px;top:466.04px;font-size:13.3px;color:#111;">More</div>
<svg class="a" style="left:1627px;top:471px;" width="7" height="4" viewBox="0 0 7 4"><path d="M0.5 0.5H6.5L3.5 3.8Z" fill="#000"/></svg>
<svg class="a" style="left:1883px;top:461px;" width="20" height="20" viewBox="0 0 20 20"><path d="M14.5 4.6A6.8 6.8 0 1 0 15.6 12.6" fill="none" stroke="#bfc4c9" stroke-width="4.4"/><path d="M14.5 4.6A6.8 6.8 0 1 0 15.6 12.6" fill="none" stroke="#eef2f6" stroke-width="2.4"/><path d="M18 1.2V8.8H10.4Z" fill="#eef2f6" stroke="#bfc4c9" stroke-width="1" stroke-linejoin="round"/></svg>
<div class="a" style="left:1269px;top:484px;width:640px;height:25px;background:#f4f8f9;"></div>
<div class="a" style="left:1269px;top:509px;width:640px;height:1px;background:#d6dadc;"></div>
<div class="a" style="left:1885px;top:486px;width:1px;height:23px;background:#d6dadc;"></div>
<div class="a" style="left:1272px;top:487px;width:15px;height:15px;border:1px solid #a6a6a6;border-radius:3px;background:#fff"></div>
<svg class="a" style="left:1298px;top:486px;" width="22" height="19" viewBox="0 0 22 19"><path d="M3.5 9.5V18.5H17.5V9.5" fill="#e6e8ea" stroke="#a7acb0"/><path d="M1 10.5L10.5 1.5L20 10.5" fill="none" stroke="#c0281d" stroke-width="2.2"/><rect x="8.5" y="12" width="4.5" height="6.5" fill="#a5542a"/></svg>
<div class="t" style="left:1329.00px;top:492.54px;font-size:13.3px;color:#2b2bd0;">Home</div>
<div class="t" style="left:1893.00px;top:490.22px;font-size:13.8px;color:#111;font-weight:bold;transform:scaleX(0.91);transform-origin:0 0;">...</div>
<div class="a" style="left:1269px;top:510px;width:640px;height:21px;background:#f4f8f9;"></div>
<div class="a" style="left:1269px;top:531px;width:640px;height:1px;background:#d6dadc;"></div>
<div class="a" style="left:1304px;top:510px;width:1px;height:21px;background:#d6dadc;"></div>
<div class="a" style="left:1335px;top:510px;width:1px;height:21px;background:#d6dadc;"></div>
<div class="a" style="left:1620px;top:510px;width:1px;height:21px;background:#d6dadc;"></div>
<div class="a" style="left:1716px;top:510px;width:1px;height:21px;background:#d6dadc;"></div>
<svg class="a" style="left:1342px;top:516px;" width="13" height="8" viewBox="0 0 13 8"><path d="M0 8L6.5 0.5L13 8Z" fill="#7f868c"/></svg>
<div class="t" style="left:1359.00px;top:514.74px;font-size:13.3px;color:#555;">Name</div>
<div class="t" style="left:1623.50px;top:514.74px;font-size:13.3px;color:#555;">Size</div>
<div class="t" style="left:1719.50px;top:514.74px;font-size:13.3px;color:#555;">Modified</div>
<div class="a" style="left:1279px;top:535px;width:15px;height:15px;border:1px solid #a6a6a6;border-radius:3px;background:#fff"></div>
<svg class="a" style="left:1311px;top:533px;" width="20" height="19" viewBox="0 0 20 19"><path d="M3.5 0.5H14L18.5 5V18.5H3.5Z" fill="#fff" stroke="#8f9499"/><path d="M14 0.5V5H18.5" fill="#eef0f2" stroke="#b9bdc1"/><circle cx="6" cy="8.5" r="5.2" fill="#e9edf2" stroke="#9ca8b6"/><path d="M6 5.5V8.5H8" stroke="#111" stroke-width="1.2" fill="none"/></svg>
<div class="t" style="left:1339.50px;top:538.54px;font-size:13.3px;color:#1f1fc0;">.Rhistory</div>
<div class="t" style="left:1624.50px;top:538.54px;font-size:13.3px;color:#222;">0 B</div>
<div class="t" style="left:1720.50px;top:538.54px;font-size:13.3px;color:#222;letter-spacing:0.48px">Oct 27, 2018, 11:45 AM</div>
<div class="a" style="left:1279px;top:562px;width:15px;height:15px;border:1px solid #a6a6a6;border-radius:3px;background:#fff"></div>
<svg class="a" style="left:1312px;top:561px;" width="19" height="17" viewBox="0 0 19 17"><defs><linearGradient id="fg" x1="0" y1="0" x2="0" y2="1"><stop offset="0" stop-color="#fff3b8"/><stop offset="0.5" stop-color="#f5d67a"/><stop offset="1" stop-color="#e9b83a"/></linearGradient></defs><path d="M1 3.5H8L10 1.5H17.5V15H1Z" fill="#f2dea0" stroke="#d7a93e"/><rect x="12" y="4" width="6" height="11" fill="#e4e8ec"/><path d="M0.5 5.5H17.5V15.5H0.5Z" fill="url(#fg)" stroke="#d9a636"/></svg>
<div class="t" style="left:1339.50px;top:565.54px;font-size:13.3px;color:#1f1fc0;">1</div>
<div class="a" style="left:1279px;top:589px;width:15px;height:15px;border:1px solid #a6a6a6;border-radius:3px;background:#fff"></div>
<svg class="a" style="left:1311px;top:586px;" width="20" height="20" viewBox="0 0 20 20"><path d="M4.5 0.5H14L19.5 6V19.5H4.5Z" fill="#fff" stroke="#b5b9be"/><path d="M14 0.5V6H19.5" fill="#eef0f2" stroke="#c6cacd"/><rect x="0.5" y="3" width="11" height="5.5" fill="#d9443c"/><path d="M7 19Q11 13 12 8Q12.5 13 17 14Q11 14 7 19Z" fill="none" stroke="#e06b66" stroke-width="0.9"/></svg>
<div class="t" style="left:1339.50px;top:592.54px;font-size:13.3px;color:#1f1fc0;">9.12<span style="font-size:14px;position:relative;top:-1px">改变喂食时间黄颡鱼肝脏转录组的比较</span>...</div>
<div class="t" style="left:1624.50px;top:592.54px;font-size:13.3px;color:#222;">584.1 KB</div>
<div class="t" style="left:1720.50px;top:592.54px;font-size:13.3px;color:#222;letter-spacing:0.20px">Sep 12, 2018, 5:17 PM</div>
<div class="a" style="left:1279px;top:616px;width:15px;height:15px;border:1px solid #a6a6a6;border-radius:3px;background:#fff"></div>
<svg class="a" style="left:1312px;top:615px;" width="19" height="17" viewBox="0 0 19 17"><defs><linearGradient id="fg" x1="0" y1="0" x2="0" y2="1"><stop offset="0" stop-color="#fff3b8"/><stop offset="0.5" stop-color="#f5d67a"/><stop offset="1" stop-color="#e9b83a"/></linearGradient></defs><path d="M1 3.5H8L10 1.5H17.5V15H1Z" fill="#f2dea0" stroke="#d7a93e"/><rect x="12" y="4" width="6" height="11" fill="#e4e8ec"/><path d="M0.5 5.5H17.5V15.5H0.5Z" fill="url(#fg)" stroke="#d9a636"/></svg>
<div class="t" style="left:1339.50px;top:619.54px;font-size:13.3px;color:#1f1fc0;">DateClean</div>
<div class="a" style="left:1279px;top:643px;width:15px;height:15px;border:1px solid #a6a6a6;border-radius:3px;background:#fff"></div>
<svg class="a" style="left:1314px;top:641px;" width="17" height="20" viewBox="0 0 17 20"><path d="M0.5 0.5H11L16.5 6V19.5H0.5Z" fill="#fff" stroke="#9da2a7"/><path d="M11 0.5V6H16.5" fill="#f1f2f4" stroke="#c0c4c8"/></svg>
<div class="t" style="left:1339.50px;top:646.54px;font-size:13.3px;color:#1f1fc0;">EasyBCD_Backup (2018-10-13).bcd</div>
<div class="t" style="left:1624.50px;top:646.54px;font-size:13.3px;color:#222;">32 KB</div>
<div class="t" style="left:1720.50px;top:646.54px;font-size:13.3px;color:#222;letter-spacing:0.20px">Oct 13, 2018, 5:32 PM</div>
<div class="a" style="left:1279px;top:670px;width:15px;height:15px;border:1px solid #a6a6a6;border-radius:3px;background:#fff"></div>
<svg class="a" style="left:1312px;top:669px;" width="19" height="17" viewBox="0 0 19 17"><defs><linearGradient id="fg" x1="0" y1="0" x2="0" y2="1"><stop offset="0" stop-color="#fff3b8"/><stop offset="0.5" stop-color="#f5d67a"/><stop offset="1" stop-color="#e9b83a"/></linearGradient></defs><path d="M1 3.5H8L10 1.5H17.5V15H1Z" fill="#f2dea0" stroke="#d7a93e"/><rect x="12" y="4" width="6" height="11" fill="#e4e8ec"/><path d="M0.5 5.5H17.5V15.5H0.5Z" fill="url(#fg)" stroke="#d9a636"/></svg>
<div class="t" style="left:1339.50px;top:673.54px;font-size:13.3px;color:#1f1fc0;">My eBooks</div>
<div class="a" style="left:1279px;top:697px;width:15px;height:15px;border:1px solid #a6a6a6;border-radius:3px;background:#fff"></div>
<svg class="a" style="left:1312px;top:696px;" width="19" height="17" viewBox="0 0 19 17"><defs><linearGradient id="fg" x1="0" y1="0" x2="0" y2="1"><stop offset="0" stop-color="#fff3b8"/><stop offset="0.5" stop-color="#f5d67a"/><stop offset="1" stop-color="#e9b83a"/></linearGradient></defs><path d="M1 3.5H8L10 1.5H17.5V15H1Z" fill="#f2dea0" stroke="#d7a93e"/><rect x="12" y="4" width="6" height="11" fill="#e4e8ec"/><path d="M0.5 5.5H17.5V15.5H0.5Z" fill="url(#fg)" stroke="#d9a636"/></svg>
<div class="t" style="left:1339.50px;top:700.54px;font-size:13.3px;color:#1f1fc0;">My Maps</div>
<div class="a" style="left:1279px;top:724px;width:15px;height:15px;border:1px solid #a6a6a6;border-radius:3px;background:#fff"></div>
<svg class="a" style="left:1312px;top:723px;" width="19" height="17" viewBox="0 0 19 17"><defs><linearGradient id="fg" x1="0" y1="0" x2="0" y2="1"><stop offset="0" stop-color="#fff3b8"/><stop offset="0.5" stop-color="#f5d67a"/><stop offset="1" stop-color="#e9b83a"/></linearGradient></defs><path d="M1 3.5H8L10 1.5H17.5V15H1Z" fill="#f2dea0" stroke="#d7a93e"/><rect x="12" y="4" width="6" height="11" fill="#e4e8ec"/><path d="M0.5 5.5H17.5V15.5H0.5Z" fill="url(#fg)" stroke="#d9a636"/></svg>
<div class="t" style="left:1339.50px;top:727.54px;font-size:13.3px;color:#1f1fc0;">R</div>
<div class="a" style="left:1279px;top:751px;width:15px;height:15px;border:1px solid #a6a6a6;border-radius:3px;background:#fff"></div>
<svg class="a" style="left:1312px;top:750px;" width="19" height="17" viewBox="0 0 19 17"><defs><linearGradient id="fg" x1="0" y1="0" x2="0" y2="1"><stop offset="0" stop-color="#fff3b8"/><stop offset="0.5" stop-color="#f5d67a"/><stop offset="1" stop-color="#e9b83a"/></linearGradient></defs><path d="M1 3.5H8L10 1.5H17.5V15H1Z" fill="#f2dea0" stroke="#d7a93e"/><rect x="12" y="4" width="6" height="11" fill="#e4e8ec"/><path d="M0.5 5.5H17.5V15.5H0.5Z" fill="url(#fg)" stroke="#d9a636"/></svg>
<div class="t" style="left:1339.50px;top:754.54px;font-size:13.3px;color:#1f1fc0;">Tencent</div>
<div class="a" style="left:1279px;top:778px;width:15px;height:15px;border:1px solid #a6a6a6;border-radius:3px;background:#fff"></div>
<svg class="a" style="left:1312px;top:777px;" width="19" height="17" viewBox="0 0 19 17"><defs><linearGradient id="fg" x1="0" y1="0" x2="0" y2="1"><stop offset="0" stop-color="#fff3b8"/><stop offset="0.5" stop-color="#f5d67a"/><stop offset="1" stop-color="#e9b83a"/></linearGradient></defs><path d="M1 3.5H8L10 1.5H17.5V15H1Z" fill="#f2dea0" stroke="#d7a93e"/><rect x="12" y="4" width="6" height="11" fill="#e4e8ec"/><path d="M0.5 5.5H17.5V15.5H0.5Z" fill="url(#fg)" stroke="#d9a636"/></svg>
<div class="t" style="left:1339.50px;top:781.54px;font-size:13.3px;color:#1f1fc0;">Tencent Files</div>
<div class="a" style="left:1279px;top:805px;width:15px;height:15px;border:1px solid #a6a6a6;border-radius:3px;background:#fff"></div>
<svg class="a" style="left:1312px;top:804px;" width="19" height="17" viewBox="0 0 19 17"><defs><linearGradient id="fg" x1="0" y1="0" x2="0" y2="1"><stop offset="0" stop-color="#fff3b8"/><stop offset="0.5" stop-color="#f5d67a"/><stop offset="1" stop-color="#e9b83a"/></linearGradient></defs><path d="M1 3.5H8L10 1.5H17.5V15H1Z" fill="#f2dea0" stroke="#d7a93e"/><rect x="12" y="4" width="6" height="11" fill="#e4e8ec"/><path d="M0.5 5.5H17.5V15.5H0.5Z" fill="url(#fg)" stroke="#d9a636"/></svg>
<div class="t" style="left:1339.50px;top:808.54px;font-size:13.3px;color:#1f1fc0;">WeChat Files</div>
<div class="a" style="left:1279px;top:832px;width:15px;height:15px;border:1px solid #a6a6a6;border-radius:3px;background:#fff"></div>
<svg class="a" style="left:1314px;top:830px;" width="17" height="20" viewBox="0 0 17 20"><path d="M0.5 0.5H11L16.5 6V19.5H0.5Z" fill="#fff" stroke="#9da2a7"/><path d="M11 0.5V6H16.5" fill="#f1f2f4" stroke="#c0c4c8"/></svg>
<div class="t" style="left:1339.50px;top:835.54px;font-size:13.3px;color:#1f1fc0;"><span style="font-size:14px;position:relative;top:-1px">图片</span> - <span style="font-size:14px;position:relative;top:-1px">快捷方式</span>.lnk</div>
<div class="t" style="left:1624.50px;top:835.54px;font-size:13.3px;color:#222;">711 B</div>
<div class="t" style="left:1720.50px;top:835.54px;font-size:13.3px;color:#222;letter-spacing:0.20px">Jan 17, 2018, 1:35 PM</div>
<div class="a" style="left:1279px;top:859px;width:15px;height:15px;border:1px solid #a6a6a6;border-radius:3px;background:#fff"></div>
<svg class="a" style="left:1312px;top:858px;" width="19" height="17" viewBox="0 0 19 17"><defs><linearGradient id="fg" x1="0" y1="0" x2="0" y2="1"><stop offset="0" stop-color="#fff3b8"/><stop offset="0.5" stop-color="#f5d67a"/><stop offset="1" stop-color="#e9b83a"/></linearGradient></defs><path d="M1 3.5H8L10 1.5H17.5V15H1Z" fill="#f2dea0" stroke="#d7a93e"/><rect x="12" y="4" width="6" height="11" fill="#e4e8ec"/><path d="M0.5 5.5H17.5V15.5H0.5Z" fill="url(#fg)" stroke="#d9a636"/></svg>
<div class="t" style="left:1339.50px;top:862.54px;font-size:13.3px;color:#1f1fc0;"><span style="font-size:14px;position:relative;top:-1px">我的导图</span></div>
<div class="a" style="left:1279px;top:886px;width:15px;height:15px;border:1px solid #a6a6a6;border-radius:3px;background:#fff"></div>
<svg class="a" style="left:1312px;top:885px;" width="19" height="17" viewBox="0 0 19 17"><defs><linearGradient id="fg" x1="0" y1="0" x2="0" y2="1"><stop offset="0" stop-color="#fff3b8"/><stop offset="0.5" stop-color="#f5d67a"/><stop offset="1" stop-color="#e9b83a"/></linearGradient></defs><path d="M1 3.5H8L10 1.5H17.5V15H1Z" fill="#f2dea0" stroke="#d7a93e"/><rect x="12" y="4" width="6" height="11" fill="#e4e8ec"/><path d="M0.5 5.5H17.5V15.5H0.5Z" fill="url(#fg)" stroke="#d9a636"/></svg>
<div class="t" style="left:1339.50px;top:889.54px;font-size:13.3px;color:#1f1fc0;"><span style="font-size:14px;position:relative;top:-1px">自定义</span> Office <span style="font-size:14px;position:relative;top:-1px">模板</span></div>
<svg class="a" style="left:1858px;top:895px;" width="62" height="125" viewBox="0 0 62 125"><defs><linearGradient id="ring" x1="0" y1="0" x2="0" y2="1"><stop offset="0" stop-color="#f2c23a"/><stop offset="0.12" stop-color="#dccf3e"/><stop offset="0.3" stop-color="#c6dc42"/><stop offset="0.47" stop-color="#b4de44"/><stop offset="0.53" stop-color="#86e44a"/><stop offset="1" stop-color="#7ae04a"/></linearGradient>
<clipPath id="inner"><circle cx="63" cy="64" r="51.5"/></clipPath></defs>
<circle cx="63" cy="64" r="57" fill="#fff"/>
<g clip-path="url(#inner)">
<path d="M10 64A53 53 0 0 1 63 11V31A33 33 0 0 0 30 64Z" fill="#3db1f2"/>
<path d="M10 64A53 53 0 0 1 17 38L35 48A33 33 0 0 0 30 64Z" fill="#3491e0"/>
<path d="M20 44A48 48 0 0 1 40 24L47 36A33 33 0 0 0 34 50Z" fill="#5cbcf0" opacity="0.6"/>
<circle cx="63" cy="64" r="33" fill="none" stroke="#f3b24e" stroke-width="2"/>
<circle cx="63" cy="64" r="31.5" fill="#f7f7f9"/>
<path d="M0 72Q6 60 20 62Q32 56 42 66Q54 64 60 76Q66 82 66 92V130H0Z" fill="#fcfcfd"/>
<path d="M0 72Q6 60 20 62Q32 56 42 66Q54 64 60 76" fill="none" stroke="#e6e8ec" stroke-width="1.2"/>
</g>
<circle cx="63" cy="64" r="54.5" fill="none" stroke="url(#ring)" stroke-width="5.5"/>
<circle cx="51" cy="63" r="4.5" fill="#0b6fe0"/>
<text x="27" y="99" font-family="Liberation Sans" font-size="19.5" fill="#1667c8">78</text><text x="48.5" y="99" font-family="Liberation Sans" font-size="14" fill="#1667c8">%</text></svg>
</body></html>
